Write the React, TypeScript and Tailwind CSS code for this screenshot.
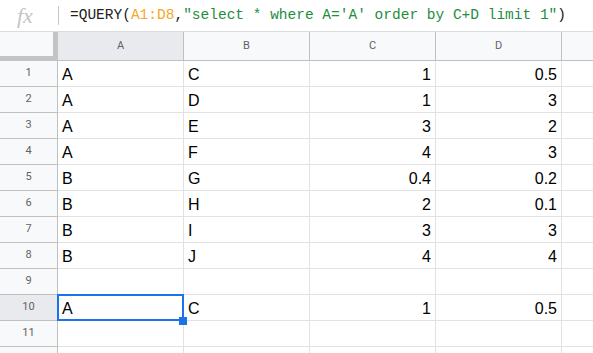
import React from 'react';

const rows: string[][] = [
  ['A', 'C', '1', '0.5'],
  ['A', 'D', '1', '3'],
  ['A', 'E', '3', '2'],
  ['A', 'F', '4', '3'],
  ['B', 'G', '0.4', '0.2'],
  ['B', 'H', '2', '0.1'],
  ['B', 'I', '3', '3'],
  ['B', 'J', '4', '4'],
  [],
  ['A', 'C', '1', '0.5'],
  [],
  [],
];

const cols = ['A', 'B', 'C', 'D'];

export default function App() {
  return (
    <div className="h-[353px] w-[593px] overflow-hidden bg-white">
      {/* Formula bar */}
      <div className="flex h-[32px] items-center border-b border-[#dadce0]">
        <div className="w-[58px] pl-[17px] font-['Liberation_Serif',serif] text-[22px] italic leading-none text-[#c4c4c4]">
          fx
        </div>
        <div className="h-[19px] w-px bg-[#c8c8c8]" />
        <div className="ml-[11px] whitespace-nowrap font-['Liberation_Mono',monospace] text-[14.5px] text-[#222]">
          =QUERY(<span className="text-[#f4a72a]">A1:D8</span>,
          <span className="text-[#1e8e3e]">"select * where A='A' order by C+D limit 1"</span>)
        </div>
      </div>

      {/* Column headers */}
      <div className="flex h-[29px] font-['Roboto',sans-serif] text-[11px] text-[#5f6368]">
        <div className="w-[58px] border-b-[5px] border-r-[5px] border-[#c4c4c4] bg-[#f8f9fa]" />
        {cols.map((c) => (
          <div
            key={c}
            className={`flex w-[126px] items-center justify-center border-b border-r border-[#c0c0c0] ${
              c === 'A' ? 'bg-[#e8eaed]' : 'bg-[#f8f9fa]'
            }`}
          >
            {c}
          </div>
        ))}
        <div className="flex-1 border-b border-[#c0c0c0] bg-[#f8f9fa]" />
      </div>

      {/* Rows */}
      {rows.map((r, i) => (
        <div key={i} className="flex h-[26px]">
          <div
            className={`flex w-[58px] items-center justify-center border-b border-r border-[#c0c0c0] font-['Roboto',sans-serif] text-[11px] text-[#5f6368] ${
              i === 9 ? 'bg-[#e8eaed]' : 'bg-[#f8f9fa]'
            }`}
          >
            {i + 1}
          </div>
          {cols.map((c, j) => (
            <div
              key={c}
              className={`relative flex w-[126px] items-end border-b border-r border-[#e2e2e3] pb-[2px] font-['Liberation_Sans',sans-serif] text-[16px] leading-[18px] text-black ${
                j >= 2 ? 'justify-end pr-[4px]' : 'pl-[4px]'
              }`}
            >
              {r[j] ?? ''}
              {i === 9 && j === 0 && (
                <>
                  <div className="absolute -bottom-[1px] -left-[1px] -right-[1px] -top-[1px] z-10 border-2 border-[#1a73e8]" />
                  <div className="absolute -bottom-[5px] -right-[4px] z-20 h-[8px] w-[8px] bg-[#1a73e8]" />
                </>
              )}
            </div>
          ))}
          <div className="flex-1 border-b border-[#e2e2e3]" />
        </div>
      ))}
    </div>
  );
}
